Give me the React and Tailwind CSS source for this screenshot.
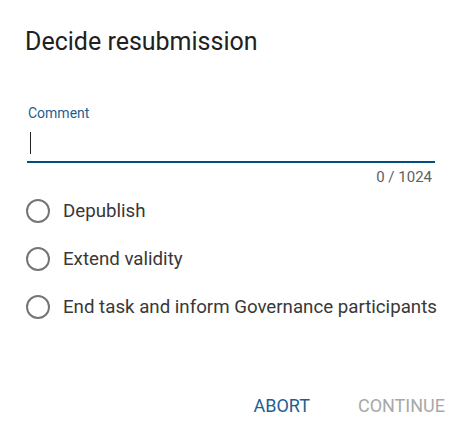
import { useState } from "react";

const options = [
  "Depublish",
  "Extend validity",
  "End task and inform Governance participants",
];

function App() {
  const [comment, setComment] = useState("");
  const [choice, setChoice] = useState(null);

  return (
    <div className="w-[464px] h-[435px] bg-white flex flex-col font-['Roboto',sans-serif]">
      <h1 className="text-[25px] leading-[32px] text-[#212121] pl-[25px] pt-[26px]">
        Decide resubmission
      </h1>

      <div className="mt-[47px] ml-[27px] w-[408px]">
        <label className="block text-[14px] leading-[16px] text-[#1e5f91] pl-[1px]">
          Comment
        </label>
        <div className="relative">
          <input
            autoFocus
            value={comment}
            onChange={(e) => setComment(e.target.value)}
            maxLength={1024}
            className="block w-full h-[42px] pt-[4px] pl-[3px] text-[18.7px] text-[#212121] caret-[#212121] outline-none border-b-2 border-[#00507f] bg-transparent"
          />
          {/* fake caret, the screenshot shows the field focused */}
          {comment === "" && (
            <span className="absolute left-[3px] top-[11px] w-[1px] h-[22px] bg-[#212121] pointer-events-none" />
          )}
        </div>
        <div className="text-right text-[15px] leading-[16px] text-[#5f5f5f] mt-[6px] pr-[3px]">
          {comment.length} / 1024
        </div>
      </div>

      <div className="flex flex-col mt-[2px] ml-[26px]">
        {options.map((opt, i) => (
          <label
            key={opt}
            className="flex items-center h-[48px] cursor-pointer"
            onClick={() => setChoice(i)}
          >
            <span className="w-[24px] h-[24px] rounded-full border-2 border-[#757575] flex items-center justify-center">
              {choice === i && (
                <span className="w-[12px] h-[12px] rounded-full bg-[#00507f]" />
              )}
            </span>
            <span className="ml-[13px] text-[18.7px] text-[#383838]">{opt}</span>
          </label>
        ))}
      </div>

      <div className="flex justify-end items-center mt-auto mb-[19px] mr-[19px] gap-[48px]">
        <button className="text-[18px] leading-[20px] text-[#1e5f91]">ABORT</button>
        <button className="text-[18px] leading-[20px] text-[#a8a8a8]" disabled={choice === null}>
          CONTINUE
        </button>
      </div>
    </div>
  );
}

export default App;
